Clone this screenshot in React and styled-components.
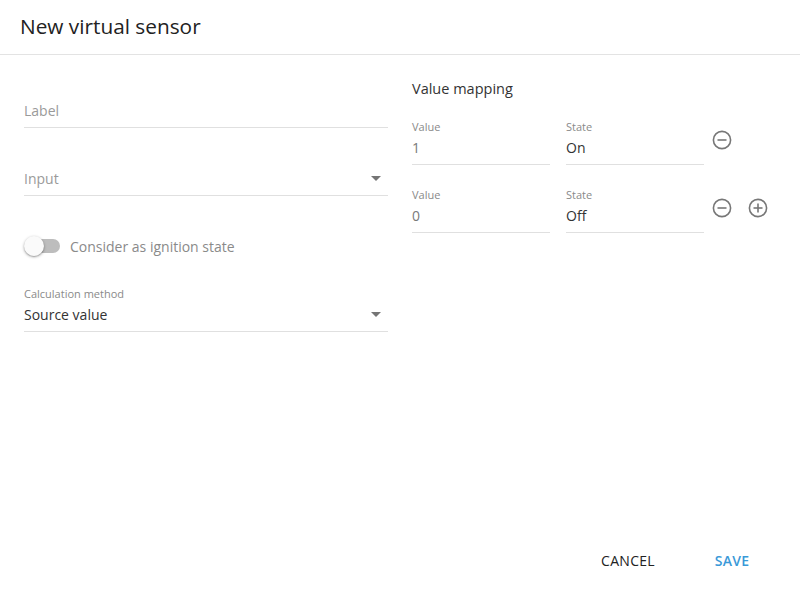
import styled, { createGlobalStyle } from "styled-components";

const GlobalStyle = createGlobalStyle`
  html, body {
    margin: 0;
    padding: 0;
    background: #fff;
  }
  body {
    font-family: "Open Sans", "Liberation Sans", sans-serif;
  }
  * {
    box-sizing: border-box;
  }
`;

const Dialog = styled.div`
  width: 800px;
  height: 600px;
  display: flex;
  flex-direction: column;
  background: #fff;
`;

const Header = styled.div`
  height: 55px;
  padding: 0 20px 2px;
  display: flex;
  align-items: center;
  border-bottom: 1px solid #e3e3e3;
  font-size: 20.8px;
  color: #222;
`;

const Body = styled.div`
  flex: 1;
  display: grid;
  grid-template-columns: 364px 1fr;
  column-gap: 24px;
  padding: 0 20px 0 24px;
`;

const Column = styled.div`
  display: flex;
  flex-direction: column;
  padding-top: ${(p) => p.$top || 0}px;
`;

const Field = styled.div`
  position: relative;
  width: ${(p) => (p.$width ? `${p.$width}px` : "100%")};
  height: ${(p) => p.$height || 49}px;
  margin-top: ${(p) => p.$mt || 0}px;
  display: flex;
  flex-direction: column;
  justify-content: flex-end;
  border-bottom: 1px solid #e0e0e0;
  padding-bottom: 6px;
`;

const SmallLabel = styled.div`
  font-size: 11px;
  line-height: 14px;
  color: #8a8a8a;
  margin-bottom: 4px;
`;

const Value = styled.div`
  font-size: 14px;
  line-height: 20px;
  color: ${(p) => (p.$muted ? "#9a9a9a" : p.$soft ? "#7a7a7a" : "#333")};
`;

const Arrow = styled.span`
  position: absolute;
  right: 7px;
  bottom: 14px;
  width: 0;
  height: 0;
  border-left: 5px solid transparent;
  border-right: 5px solid transparent;
  border-top: 5px solid #757575;
`;

const ToggleRow = styled.div`
  display: flex;
  align-items: center;
  height: 24px;
  margin-top: ${(p) => p.$mt || 0}px;
  gap: 10px;
`;

const Track = styled.div`
  position: relative;
  width: 34px;
  height: 14px;
  border-radius: 7px;
  background: #bdbdbd;
  margin-left: 2px;
`;

const Thumb = styled.div`
  position: absolute;
  left: -2px;
  top: -3px;
  width: 20px;
  height: 20px;
  border-radius: 50%;
  background: #fafafa;
  box-shadow: 0 1px 3px rgba(0, 0, 0, 0.35), 0 1px 1px rgba(0, 0, 0, 0.14);
`;

const ToggleText = styled.span`
  font-size: 14px;
  color: #8a8a8a;
`;

const SectionTitle = styled.div`
  font-size: 14.5px;
  line-height: 20px;
  font-weight: 500;
  color: #333;
`;

const MapRow = styled.div`
  display: flex;
  align-items: flex-start;
  gap: 16px;
  margin-top: ${(p) => p.$mt || 0}px;
`;

const Icons = styled.div`
  display: flex;
  gap: 16px;
  margin-left: -8px;
  padding-top: 10px;
`;

const IconButton = styled.span`
  display: flex;
  width: 20px;
  height: 20px;
`;

const Footer = styled.div`
  display: flex;
  justify-content: flex-end;
  gap: 16px;
  padding: 0 24px 22px 0;
`;

const Button = styled.button`
  min-width: 88px;
  height: 36px;
  border: none;
  background: none;
  font-family: inherit;
  font-size: 14px;
  font-weight: ${(p) => (p.$primary ? 600 : 400)};
  letter-spacing: 0.3px;
  color: ${(p) => (p.$primary ? "#3a99d8" : "#222")};
  padding: 0 8px;
`;

function CircleIcon({ plus }) {
  return (
    <IconButton>
      <svg width="20" height="20" viewBox="0 0 20 20" fill="none" stroke="#777" strokeWidth="1.6">
        <circle cx="10" cy="10" r="8.6" />
        <line x1="5.5" y1="10" x2="14.5" y2="10" />
        {plus && <line x1="10" y1="5.5" x2="10" y2="14.5" />}
      </svg>
    </IconButton>
  );
}

function MappingRow({ value, state, mt, last }) {
  return (
    <MapRow $mt={mt}>
      <Field $width={138} $height={45}>
        <SmallLabel>Value</SmallLabel>
        <Value $soft>{value}</Value>
      </Field>
      <Field $width={138} $height={45}>
        <SmallLabel>State</SmallLabel>
        <Value>{state}</Value>
      </Field>
      <Icons>
        <CircleIcon />
        {last && <CircleIcon plus />}
      </Icons>
    </MapRow>
  );
}

export default function App() {
  return (
    <>
      <GlobalStyle />
      <Dialog>
        <Header>New virtual sensor</Header>
        <Body>
          <Column $top={24}>
            <Field>
              <Value $muted>Label</Value>
            </Field>
            <Field $mt={19}>
              <Value $muted>Input</Value>
              <Arrow />
            </Field>
            <ToggleRow $mt={38}>
              <Track>
                <Thumb />
              </Track>
              <ToggleText>Consider as ignition state</ToggleText>
            </ToggleRow>
            <Field $mt={25}>
              <SmallLabel>Calculation method</SmallLabel>
              <Value>Source value</Value>
              <Arrow />
            </Field>
          </Column>
          <Column $top={24}>
            <SectionTitle>Value mapping</SectionTitle>
            <MappingRow value="1" state="On" mt={21} />
            <MappingRow value="0" state="Off" mt={23} last />
          </Column>
        </Body>
        <Footer>
          <Button>CANCEL</Button>
          <Button $primary>SAVE</Button>
        </Footer>
      </Dialog>
    </>
  );
}
